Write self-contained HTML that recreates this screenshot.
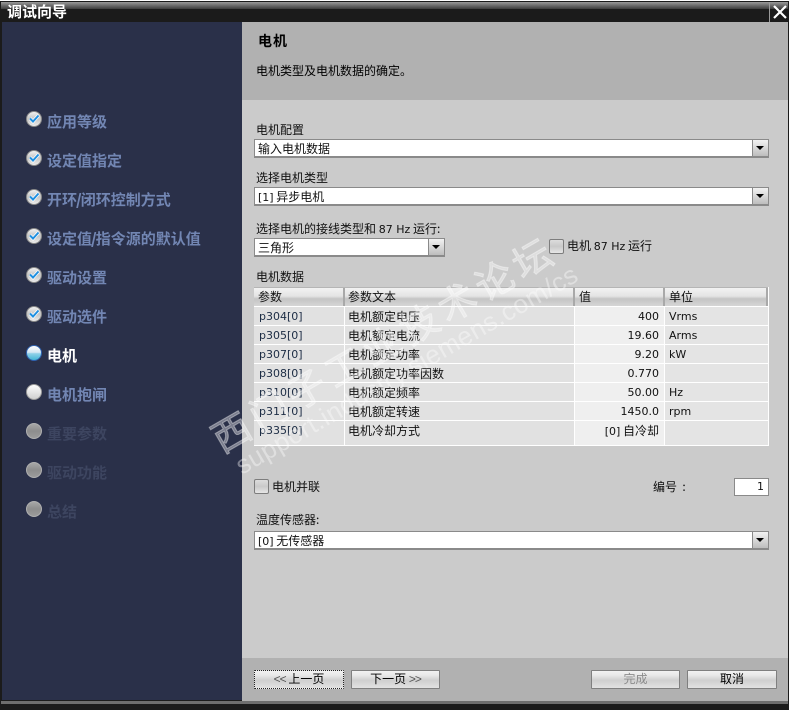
<!DOCTYPE html>
<html lang="zh"><head><meta charset="utf-8"><title>调试向导</title>
<style>
*{box-sizing:border-box}
html,body{margin:0;padding:0;width:790px;height:710px;overflow:hidden;background:#fff}
body{position:relative;font:12px/16px "WenQuanYi Zen Hei","Noto Sans CJK SC",sans-serif;color:#111}
.a,.t,.sel,.cb,.btn,.n{position:absolute}
.t{white-space:nowrap}
.l{font-family:"DejaVu Sans","WenQuanYi Zen Hei",sans-serif;font-size:11px}
.sel{left:254px;width:515px;height:19px;background:#fff;border:1px solid #8a8a8a;border-width:1px 1px 2px 1px;padding:1px 0 0 3px;line-height:16px}
.sel i{position:absolute;right:0;top:0;bottom:0;width:16px;border-left:1px solid #8a8a8a;background:linear-gradient(#f2f2f2,#d8d8d8 50%,#bdbdbd)}
.sel i:after{content:"";position:absolute;left:3px;top:6px;border:4px solid transparent;border-top:4px solid #000;border-bottom:0}
.cb{width:15px;height:15px;border:1px solid #7d7d7d;border-radius:2px;background:linear-gradient(#dcdcdc,#c9c9c9 50%,#e6e6e6)}
.btn{top:670px;width:89px;height:19px;border:1px solid #7f7f7f;border-radius:1px;background:linear-gradient(#f2f2f2,#e8e8e8 25%,#cfcfcf 55%,#e2e2e2);text-align:center;line-height:16px;color:#000}
.side{position:absolute;left:47px;font-size:15px;font-weight:bold;color:#7286b3;line-height:18px;white-space:nowrap}
.side b{margin:0 -1px}
.ic{position:absolute;left:26px;width:16px;height:16px}
.th,.td{position:absolute;white-space:nowrap;overflow:hidden}
.th{top:288px;height:18px;line-height:17px;padding-left:4px;background:linear-gradient(#f2f2f2,#e4e4e4 45%,#c4c4c4 60%,#d6d6d6);border-right:2px solid #a9a9a9}
.td{height:18px;line-height:19px;padding:0 4px 0 3px;background:#e1e1e1}
.p{left:254px;width:90px;padding-left:5px;color:#1c2c44}
.x{left:345px;width:229px}
.v{left:575px;width:89px;text-align:right;background:#efefef;padding-right:5px}
.u{left:665px;width:103px;padding-left:4px;background:#e4e4e4}
</style></head><body>
<div class="a" style="left:0;top:1px;width:789px;height:709px;background:#1b1b1b"></div>
<div class="a" style="left:1px;top:2px;width:787px;height:7px;background:linear-gradient(#9a9a9a,#3d3d3d)"></div>
<div class="a" style="left:769px;top:2px;width:1px;height:20px;background:#9a9a9a"></div>
<svg class="a" style="left:772px;top:4px" width="16" height="16" viewBox="0 0 16 16"><path d="M2 2L14 14M14 2L2 14" stroke="#fff" stroke-width="2.2" fill="none"/></svg>
<div class="t" style="left:7px;top:3px;font-size:15px;font-weight:bold;color:#fff;line-height:18px">调试向导</div>

<div class="a" style="left:2px;top:22px;width:240px;height:678px;background:#2a3049"></div>
<div class="a" style="left:242px;top:22px;width:546px;height:78px;background:#b1b1b1"></div>
<div class="a" style="left:242px;top:100px;width:546px;height:558px;background:#cbcbcb"></div>
<div class="a" style="left:242px;top:658px;width:546px;height:43px;background:#b1b1b1"></div>
<div class="a" style="left:1px;top:701px;width:787px;height:3px;background:#6e6e6e"></div>

<svg width="0" height="0" style="position:absolute"><defs>
<linearGradient id="g1" x1="0" y1="0" x2="0" y2="1"><stop offset="0" stop-color="#f4f4f4"/><stop offset=".5" stop-color="#c4c4c4"/><stop offset="1" stop-color="#f0f0f0"/></linearGradient>
<linearGradient id="g2" x1="0" y1="0" x2="0" y2="1"><stop offset="0" stop-color="#fff"/><stop offset=".45" stop-color="#d8e8f4"/><stop offset=".55" stop-color="#8fd0e8"/><stop offset="1" stop-color="#3fb4d4"/></linearGradient>
<linearGradient id="g3" x1="0" y1="0" x2="0" y2="1"><stop offset="0" stop-color="#fff"/><stop offset=".5" stop-color="#e6e6e6"/><stop offset="1" stop-color="#cfcfcf"/></linearGradient>
<linearGradient id="g4" x1="0" y1="0" x2="0" y2="1"><stop offset="0" stop-color="#a8a8a8"/><stop offset=".5" stop-color="#8d8d8d"/><stop offset="1" stop-color="#9c9c9c"/></linearGradient>
<g id="done"><circle cx="8" cy="8" r="7.5" fill="url(#g1)" stroke="#8a8a8a"/><path d="M4 7.5L7 10.5L12.5 4.5" stroke="#fff" stroke-width="3.4" fill="none"/><path d="M4 7.5L7 10.5L12.5 4.5" stroke="#1f8fe0" stroke-width="2" fill="none"/></g>
<g id="cur"><circle cx="8" cy="8" r="7.5" fill="url(#g2)" stroke="#2f62b0"/></g>
<g id="next"><circle cx="8" cy="8" r="7.5" fill="url(#g3)" stroke="#9a9a9a"/></g>
<g id="off"><circle cx="8" cy="8" r="7.5" fill="url(#g4)" stroke="#b0b0b0"/></g>
</defs></svg>

<svg class="ic" style="top:111px"><use href="#done"/></svg><div class="side" style="top:113px">应用等级</div>
<svg class="ic" style="top:150px"><use href="#done"/></svg><div class="side" style="top:152px">设定值指定</div>
<svg class="ic" style="top:189px"><use href="#done"/></svg><div class="side" style="top:191px">开环<b>/</b>闭环控制方式</div>
<svg class="ic" style="top:228px"><use href="#done"/></svg><div class="side" style="top:230px">设定值<b>/</b>指令源的默认值</div>
<svg class="ic" style="top:267px"><use href="#done"/></svg><div class="side" style="top:269px">驱动设置</div>
<svg class="ic" style="top:306px"><use href="#done"/></svg><div class="side" style="top:308px">驱动选件</div>
<svg class="ic" style="top:345px"><use href="#cur"/></svg><div class="side" style="top:347px;color:#fff">电机</div>
<svg class="ic" style="top:384px"><use href="#next"/></svg><div class="side" style="top:386px">电机抱闸</div>
<svg class="ic" style="top:423px"><use href="#off"/></svg><div class="side" style="top:425px;color:#3d4560">重要参数</div>
<svg class="ic" style="top:462px"><use href="#off"/></svg><div class="side" style="top:464px;color:#3d4560">驱动功能</div>
<svg class="ic" style="top:501px"><use href="#off"/></svg><div class="side" style="top:503px;color:#3d4560">总结</div>

<div class="t" style="left:258px;top:32px;font-size:14px;font-weight:bold;line-height:18px;color:#000;letter-spacing:1px">电机</div>
<div class="t" style="left:256px;top:63px;color:#000">电机类型及电机数据的确定。</div>

<div class="t" style="left:256px;top:122px">电机配置</div>
<div class="sel" style="top:139px">输入电机数据<i></i></div>
<div class="t" style="left:256px;top:170px">选择电机类型</div>
<div class="sel" style="top:187px"><span class="l">[1]</span> 异步电机<i></i></div>
<div class="t" style="left:256px;top:221px">选择电机的接线类型和 <span class="l">87 Hz</span> 运行:</div>
<div class="sel" style="top:238px;width:191px">三角形<i></i></div>
<div class="cb" style="left:549px;top:239px"></div>
<div class="t" style="left:567px;top:238px">电机 <span class="l">87 Hz</span> 运行</div>
<div class="t" style="left:256px;top:269px">电机数据</div>

<div class="a" style="left:254px;top:287px;width:515px;height:159px;background:#fff"></div>
<div class="a" style="left:254px;top:287px;width:514px;height:1px;background:#b5b5b5"></div>
<div class="th" style="left:254px;width:91px">参数</div>
<div class="th" style="left:345px;width:230px;padding-left:3px">参数文本</div>
<div class="th" style="left:575px;width:90px">值</div>
<div class="th" style="left:665px;width:103px">单位</div>

<div class="td l p" style="top:307px">p304[0]</div><div class="td x" style="top:307px">电机额定电压</div><div class="td l v" style="top:307px">400</div><div class="td l u" style="top:307px">Vrms</div>
<div class="td l p" style="top:326px">p305[0]</div><div class="td x" style="top:326px">电机额定电流</div><div class="td l v" style="top:326px">19.60</div><div class="td l u" style="top:326px">Arms</div>
<div class="td l p" style="top:345px">p307[0]</div><div class="td x" style="top:345px">电机额定功率</div><div class="td l v" style="top:345px">9.20</div><div class="td l u" style="top:345px">kW</div>
<div class="td l p" style="top:364px">p308[0]</div><div class="td x" style="top:364px">电机额定功率因数</div><div class="td l v" style="top:364px">0.770</div><div class="td l u" style="top:364px"></div>
<div class="td l p" style="top:383px">p310[0]</div><div class="td x" style="top:383px">电机额定频率</div><div class="td l v" style="top:383px">50.00</div><div class="td l u" style="top:383px">Hz</div>
<div class="td l p" style="top:402px">p311[0]</div><div class="td x" style="top:402px">电机额定转速</div><div class="td l v" style="top:402px">1450.0</div><div class="td l u" style="top:402px">rpm</div>
<div class="td l p" style="top:421px;height:24px">p335[0]</div><div class="td x" style="top:421px;height:24px">电机冷却方式</div><div class="td v" style="top:421px;height:24px"><span class="l">[0]</span> 自冷却</div><div class="td l u" style="top:421px;height:24px"></div>

<div class="cb" style="left:254px;top:479px"></div>
<div class="t" style="left:272px;top:479px">电机并联</div>
<div class="t" style="left:653px;top:479px">编号&nbsp;&nbsp;:</div>
<div class="n l" style="left:734px;top:478px;width:35px;height:18px;background:#fff;border:1px solid #8a8a8a;text-align:right;padding-right:4px;line-height:16px">1</div>
<div class="t" style="left:256px;top:512px">温度传感器:</div>
<div class="sel" style="top:531px"><span class="l">[0]</span> 无传感器<i></i></div>

<div class="btn" style="left:254px;width:90px;border:1px dotted #222"><span style="font-family:'Liberation Sans',sans-serif;color:#555;letter-spacing:-1px">&lt;&lt;</span> 上一页</div>
<div class="btn" style="left:351px">下一页 <span style="font-family:'Liberation Sans',sans-serif;color:#555;letter-spacing:-1px">&gt;&gt;</span></div>
<div class="btn" style="left:591px;color:#8c8c8c">完成</div>
<div class="btn" style="left:687px;width:90px">取消</div>

<svg class="a" style="left:0;top:0;pointer-events:none" width="790" height="710" viewBox="0 0 790 710">
<g transform="translate(222,454) rotate(-30)" fill="#fff" fill-opacity=".38">
<text x="0" y="0" font-family="Noto Sans CJK SC,sans-serif" font-size="38" stroke="#fff" stroke-opacity=".38" stroke-width="1" letter-spacing="5.4">西门子工业技术论坛</text>
</g>
<g transform="translate(242,475) rotate(-30)" fill="#fff" fill-opacity=".38">
<text x="0" y="0" font-family="Liberation Sans,sans-serif" font-size="26" textLength="390">support.industry.siemens.com/cs</text>
</g>
</svg>
</body></html>
